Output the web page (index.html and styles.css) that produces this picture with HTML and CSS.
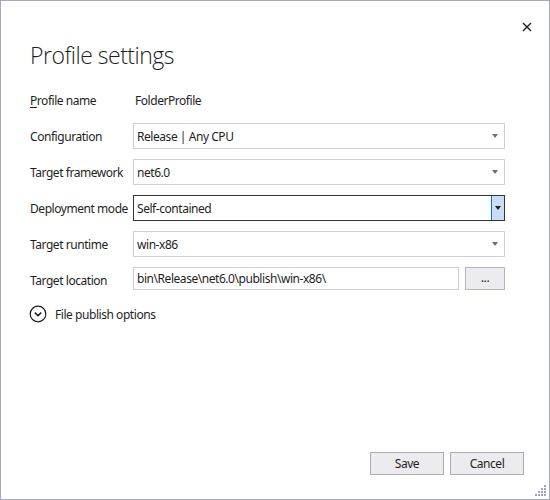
FILE: index.html
```html
<!DOCTYPE html>
<html>
<head>
<meta charset="utf-8">
<link rel="stylesheet" href="styles.css">
</head>
<body>
<div class="dialog">
  <div class="titlebar">
    <svg class="close" width="10" height="10" viewBox="0 0 10 10"><path d="M1 1 L9 9 M9 1 L1 9" stroke="#1e1e1e" stroke-width="1.4"/></svg>
  </div>
  <h1 class="title">Profile settings</h1>
  <div class="form">
    <div class="label"><span class="u">P</span>rofile name</div>
    <div class="value">FolderProfile</div>

    <div class="label">Configuration</div>
    <div class="combo"><span class="text">Release | Any CPU</span><span class="arrow"></span></div>

    <div class="label">Target framework</div>
    <div class="combo"><span class="text">net6.0</span><span class="arrow"></span></div>

    <div class="label">Deployment mode</div>
    <div class="combo focus"><span class="text">Self-contained</span><span class="btn"><span class="arrow dark"></span></span></div>

    <div class="label">Target runtime</div>
    <div class="combo"><span class="text">win-x86</span><span class="arrow"></span></div>

    <div class="label">Target location</div>
    <div class="locrow">
      <div class="textbox">bin\Release\net6.0\publish\win-x86\</div>
      <div class="browse">...</div>
    </div>
  </div>
  <div class="expander">
    <svg width="18" height="18" viewBox="0 0 18 18"><circle cx="9" cy="9" r="7.8" fill="none" stroke="#1e1e1e" stroke-width="1.2"/><path d="M5.8 7.6 L9 10.6 L12.2 7.6" fill="none" stroke="#1e1e1e" stroke-width="1.5"/></svg>
    <span>File publish options</span>
  </div>
  <div class="spacer"></div>
  <div class="footer">
    <div class="button">Save</div>
    <div class="button">Cancel</div>
  </div>
  <svg class="grip" width="12" height="12" viewBox="0 0 12 12" fill="#9fa3bf">
    <rect x="9" y="0" width="2" height="2"/>
    <rect x="6" y="3" width="2" height="2"/><rect x="9" y="3" width="2" height="2"/>
    <rect x="3" y="6" width="2" height="2"/><rect x="6" y="6" width="2" height="2"/><rect x="9" y="6" width="2" height="2"/>
    <rect x="0" y="9" width="2" height="2"/><rect x="3" y="9" width="2" height="2"/><rect x="6" y="9" width="2" height="2"/><rect x="9" y="9" width="2" height="2"/>
  </svg>
</div>
</body>
</html>
```
FILE: styles.css
```css
html, body {
  margin: 0;
  padding: 0;
  background: #fff;
}
body {
  font-family: "Noto Sans", "Open Sans", sans-serif;
  font-size: 12px;
  letter-spacing: -0.45px;
  color: #1e1e1e;
}
.dialog {
  position: relative;
  width: 550px;
  height: 500px;
  box-sizing: border-box;
  border: 1px solid #a5a7c4;
  display: flex;
  flex-direction: column;
  padding: 0 44px 0 29px;
}
.titlebar {
  height: 30px;
  display: flex;
  justify-content: flex-end;
  align-items: flex-end;
  margin-right: -27px;
}
.close {
  display: block;
  margin-bottom: -1px;
}
.title {
  margin: 7px 0 0 0;
  font-family: "Open Sans", "Noto Sans", sans-serif;
  font-weight: 300;
  font-size: 23px;
  line-height: 34px;
  color: #1e1e1e;
  letter-spacing: -0.5px;
}
.form {
  margin-top: 15px;
  display: grid;
  grid-template-columns: 103px 372px;
  grid-auto-rows: 26px;
  row-gap: 10px;
}
.label, .value {
  display: flex;
  align-items: center;
  white-space: nowrap;
}
.value {
  padding-left: 2px;
}
.u {
  text-decoration: underline;
  text-underline-offset: 2px;
}
.combo {
  box-sizing: border-box;
  border: 1px solid #cccedb;
  display: flex;
  align-items: center;
  padding-left: 3px;
}
.combo .text {
  flex: 1;
}
.arrow {
  width: 0;
  height: 0;
  border-left: 3.5px solid transparent;
  border-right: 3.5px solid transparent;
  border-top: 4px solid #717171;
  margin-right: 6px;
}
.combo.focus {
  border-color: #333337;
}
.combo .btn {
  align-self: stretch;
  width: 12px;
  background: #c9def5;
  border-left: 1px solid #007acc;
  display: flex;
  align-items: center;
  justify-content: center;
}
.arrow.dark {
  border-top-color: #1e1e1e;
  margin: 0;
}
.locrow {
  display: flex;
  align-items: stretch;
  gap: 6px;
  padding-bottom: 3px;
}
.textbox {
  width: 326px;
  box-sizing: border-box;
  border: 1px solid #cccedb;
  display: flex;
  align-items: center;
  padding-left: 3px;
  white-space: nowrap;
}
.browse {
  flex: 1;
  box-sizing: border-box;
  border: 1px solid #b4b4bc;
  background: #ececf0;
  display: flex;
  align-items: center;
  justify-content: center;
  padding-bottom: 2px;
}
.expander {
  margin-top: 12px;
  display: flex;
  align-items: center;
  gap: 8px;
  margin-left: -1px;
}
.expander svg {
  display: block;
}
.spacer {
  flex: 1;
}
.footer {
  display: flex;
  justify-content: flex-end;
  gap: 6px;
  margin-right: -19px;
  margin-bottom: 24px;
}
.button {
  width: 74px;
  height: 23px;
  box-sizing: border-box;
  border: 1px solid #acacb4;
  background: #ececf0;
  display: flex;
  align-items: center;
  justify-content: center;
}
.grip {
  position: absolute;
  right: 2px;
  bottom: 2px;
}
```
